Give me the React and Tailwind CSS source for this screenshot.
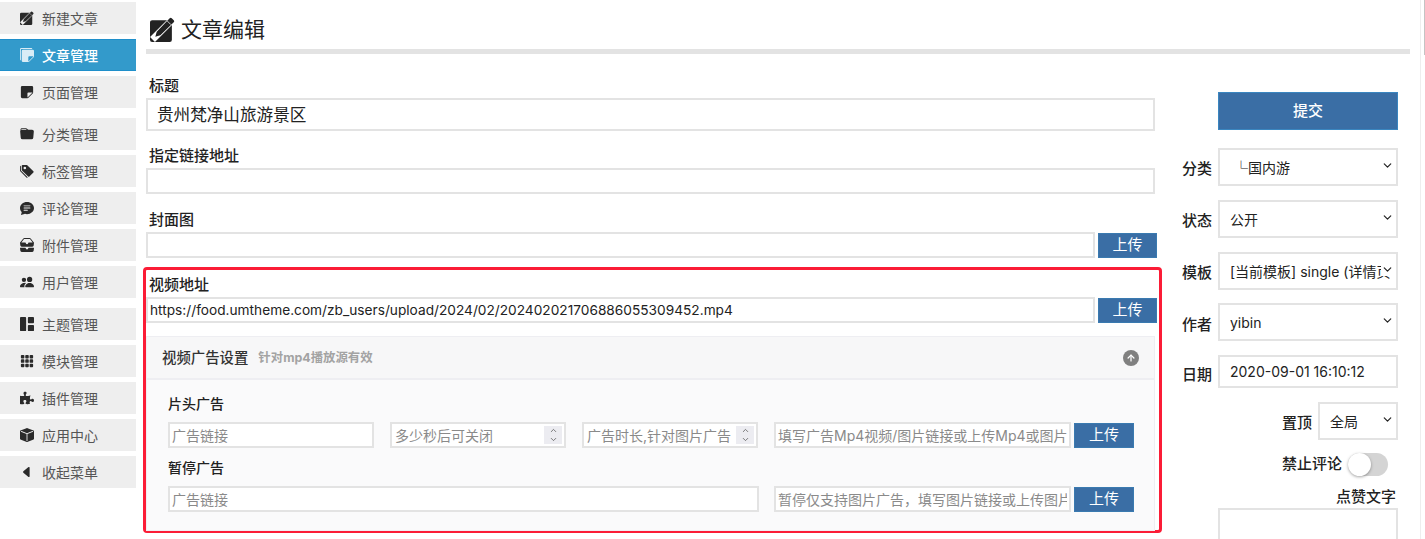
import React from 'react';
import {
  BsStickiesFill, BsStickyFill, BsFolderFill, BsTagsFill, BsChatTextFill, BsInboxesFill,
  BsPeopleFill, BsGrid1X2Fill, BsGrid3X3GapFill, BsBoxFill, BsCaretLeftFill,
} from 'react-icons/bs';
import { FaPuzzlePiece } from 'react-icons/fa';
import { ArrowUp, ChevronDown, ChevronUp } from 'lucide-react';

const PencilIcon = ({ className }) => (
  <svg viewBox="0 0 16 16" className={className}>
    <rect x="0" y="2" width="14" height="14" rx="1.4" fill="currentColor" />
    <path d="M1.6 14.4L14.4 1.6" stroke="#fff" strokeWidth="4.4" className="[stroke:var(--cut)]" />
    <path d="M3.4 12.6l.9-3.2L12.6.8a.9.9 0 0 1 1.3 0l1.3 1.3a.9.9 0 0 1 0 1.3L6.6 11.7z" fill="currentColor" />
    <path d="M11.1 2.6l2.3 2.3" stroke="#fff" strokeWidth=".5" className="[stroke:var(--cut)]" />
  </svg>
);

const groups = [
  [
    { label: '新建文章', icon: PencilIcon },
    { label: '文章管理', icon: BsStickiesFill, active: true },
    { label: '页面管理', icon: BsStickyFill },
  ],
  [
    { label: '分类管理', icon: BsFolderFill },
    { label: '标签管理', icon: BsTagsFill },
    { label: '评论管理', icon: BsChatTextFill },
    { label: '附件管理', icon: BsInboxesFill },
    { label: '用户管理', icon: BsPeopleFill },
  ],
  [
    { label: '主题管理', icon: BsGrid1X2Fill },
    { label: '模块管理', icon: BsGrid3X3GapFill },
    { label: '插件管理', icon: FaPuzzlePiece },
    { label: '应用中心', icon: BsBoxFill },
    { label: '收起菜单', icon: BsCaretLeftFill },
  ],
];

const inputCls = 'h-[26px] border-2 border-[#e3e3e3] bg-white px-[2px] text-[14px] text-[#222] outline-none placeholder:text-[#8a8a8a]';

const Upload = ({ w = 'w-[60px]' }) => (
  <button className={`h-[25px] shrink-0 border border-[#3a7ab0] bg-[#3a6ea5] text-[15px] text-white ${w}`}>上传</button>
);

const Spin = ({ placeholder }) => (
  <div className="flex h-[26px] w-[176px] items-center border-2 border-[#e3e3e3] bg-white pl-[3px] pr-[2px]">
    <input placeholder={placeholder} className="min-w-0 flex-1 text-[14px] outline-none placeholder:text-[#8a8a8a]" />
    <span className="flex h-[18px] w-[18px] shrink-0 flex-col items-center justify-center bg-[#ececf1] text-[#555]">
      <ChevronUp size={9} />
      <ChevronDown size={9} />
    </span>
  </div>
);

const Sel = ({ value, w = 'w-[180px]', h = 'h-[38px]' }) => (
  <div className={`relative ${w} ${h}`}>
    <select
      defaultValue={value}
      className="h-full w-full appearance-none border-2 border-[#e3e3e3] bg-white pl-[10px] pr-[6px] text-[14px] text-[#222] outline-none"
    >
      <option>{value}</option>
    </select>
    <ChevronDown size={13} strokeWidth={2.2} className="pointer-events-none absolute right-[4px] top-[11px] bg-white text-[#222]" />
  </div>
);

const Side = ({ label, children, className = '', pt = 'pt-[4px]' }) => (
  <div className={`flex items-center ${className}`}>
    <span className={`w-[36px] text-[15px] font-medium text-[#222] ${pt}`}>{label}</span>
    {children}
  </div>
);

export default function App() {
  return (
    <div className="flex h-[539px] w-[1425px] overflow-hidden bg-white" style={{ fontFamily: 'Inter, "Noto Sans CJK SC", sans-serif' }}>
      <aside className="w-[136px] shrink-0 pt-[2px]">
        {groups.map((g, i) => (
          <div key={i} className="mb-[10px]">
            {g.map(({ label, icon: Icon, active }) => (
              <div
                key={label}
                className={`mb-[5px] flex h-[32px] items-center gap-[8px] pl-[20px] text-[14px] ${active ? 'border-y border-[#1f8fca] bg-[#339acb] font-medium text-white [--cut:#339acb]' : 'bg-[#eeeeee] text-[#555] [--cut:#eeeeee]'}`}
              >
                <Icon className={`h-[14px] w-[14px] ${active ? 'text-[#d9ecf6]' : 'text-[#2a2a2a]'}`} />
                <span>{label}</span>
              </div>
            ))}
          </div>
        ))}
      </aside>

      <main className="ml-[10px] w-[1264px] shrink-0">
        <div className="flex h-[54px] items-center border-b-[5px] border-[#e3e3e3] pt-[10px] [--cut:#ffffff]">
          <PencilIcon className="ml-[4px] mr-[6px] h-[25px] w-[25px] text-[#222]" />
          <h1 className="text-[21px] text-[#222]">文章编辑</h1>
        </div>

        <div className="flex">
          <section className="w-[1009px] shrink-0 pt-[22px]">
            <label className="block h-[20px] pl-[3px] text-[15px] font-medium leading-[20px] text-[#222]">标题</label>
            <input defaultValue="贵州梵净山旅游景区" className="mt-[2px] block h-[33px] w-full border-2 border-[#e3e3e3] pb-[2px] pl-[9px] pr-[10px] text-[16.6px] text-[#222] outline-none" />

            <label className="mt-[15px] block h-[20px] pl-[3px] text-[15px] font-medium leading-[20px] text-[#222]">指定链接地址</label>
            <input className={`mt-[2px] block w-full ${inputCls}`} />

            <label className="mt-[16px] block h-[20px] pl-[3px] text-[15px] font-medium leading-[20px] text-[#222]">封面图</label>
            <div className="mt-[2px] flex w-[1011px] items-center gap-[3px]">
              <input className={`w-[949px] ${inputCls}`} />
              <Upload w="w-[59px]" />
            </div>

            <div className="-ml-[3px] mt-[9px] h-[266px] w-[1019px] rounded-[4px] border-[3px] border-[#fb1c36] pt-[5px]">
              <label className="block h-[20px] pl-[3px] text-[15px] font-medium leading-[20px] text-[#222]">视频地址</label>
              <div className="mt-[2px] flex w-[1011px] items-center gap-[3px]">
                <input defaultValue="https://food.umtheme.com/zb_users/upload/2024/02/202402021706886055309452.mp4" className="h-[26px] w-[949px] border-2 border-[#e3e3e3] bg-white px-[2px] text-[13.7px] text-[#222] outline-none" />
                <Upload w="w-[59px]" />
              </div>

              <div className="mt-[13px] h-[195px] w-[1009px] border border-[#eeeef2] bg-[#fafafb]">
                <div className="flex h-[43px] items-center border-b-2 border-[#eeeef2] bg-[#f7f7f8] px-[15px]">
                  <span className="pt-[1px] text-[14.4px] font-medium text-[#333]">视频广告设置</span>
                  <span className="ml-[10px] pt-[2px] text-[12.4px] font-bold text-[#a3a3a3]">针对mp4播放源有效</span>
                  <span className="ml-auto flex h-[16px] w-[16px] items-center justify-center rounded-full bg-[#808080] text-white">
                    <ArrowUp size={10} strokeWidth={3} />
                  </span>
                </div>
                <div className="pl-[21px] pt-[14px]">
                  <div className="h-[20px] text-[14px] font-medium leading-[20px] text-[#222]">片头广告</div>
                  <div className="mt-[8px] flex items-center">
                    <input placeholder="广告链接" className={`w-[206px] ${inputCls}`} />
                    <div className="ml-[16px]"><Spin placeholder="多少秒后可关闭" /></div>
                    <div className="ml-[16px]"><Spin placeholder="广告时长,针对图片广告" /></div>
                    <input placeholder="填写广告Mp4视频/图片链接或上传Mp4或图片" className={`ml-[16px] mr-[3px] w-[297px] ${inputCls}`} />
                    <Upload />
                  </div>
                  <div className="mt-[10px] h-[20px] text-[14px] font-medium leading-[20px] text-[#222]">暂停广告</div>
                  <div className="mt-[8px] flex items-center">
                    <input placeholder="广告链接" className={`w-[591px] ${inputCls}`} />
                    <input placeholder="暂停仅支持图片广告，填写图片链接或上传图片" className={`ml-[15px] mr-[3px] w-[297px] ${inputCls}`} />
                    <Upload />
                  </div>
                </div>
              </div>
            </div>
          </section>

          <section className="ml-[27px] w-[216px] pt-[38px]">
            <button className="ml-[36px] block h-[38px] w-[180px] border border-[#3a86c0] bg-[#3a6ea5] text-[15px] font-medium text-white">提交</button>
            <div className="mt-[18px] flex flex-col gap-[14px]">
              <Side label="分类"><Sel value={'\u00a0└国内游'} /></Side>
              <Side label="状态"><Sel value="公开" /></Side>
              <Side label="模板"><Sel value="[当前模板] single (详情页)" /></Side>
              <Side label="作者" className="-mt-[1px]" pt="pt-[6px]"><Sel value="yibin" /></Side>
              <Side label="日期" pt="pt-[7px]">
                <input defaultValue="2020-09-01 16:10:12" className="h-[33px] w-[180px] border-2 border-[#e3e3e3] px-[10px] text-[14px] text-[#222] outline-none" />
              </Side>
            </div>
            <div className="mt-[14px] flex items-center justify-end">
              <span className="mr-[6px] pt-[4px] text-[15px] font-medium text-[#222]">置顶</span>
              <Sel value="全局" w="w-[80px]" />
            </div>
            <div className="mt-[13px] flex items-center justify-end pr-[10px]">
              <span className="mr-[6px] text-[15px] font-medium text-[#222]">禁止评论</span>
              <div className="h-[23px] w-[40px] rounded-full bg-[#d4d4d4]">
                <div className="h-[23px] w-[23px] rounded-full bg-white shadow-[0_1px_3px_rgba(0,0,0,0.35)]" />
              </div>
            </div>
            <div className="mt-[11px] h-[20px] pr-[2px] text-right text-[15px] font-medium leading-[20px] text-[#222]">点赞文字</div>
            <textarea className="ml-[36px] mt-[1px] block h-[60px] w-[180px] border-2 border-[#e3e3e3] outline-none" />
          </section>
        </div>
      </main>

      <div className="ml-[10px] flex h-full w-[5px] justify-end border-l border-[#eeeeee]">
        <div className="h-[55px] w-[1px] bg-[#c4c4c4]" />
      </div>
    </div>
  );
}
